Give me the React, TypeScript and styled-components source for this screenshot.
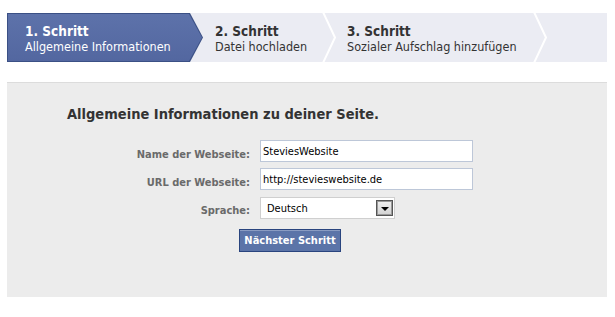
import React from "react";
import styled, { createGlobalStyle } from "styled-components";

const Global = createGlobalStyle`
  html, body { margin: 0; padding: 0; background: #fff; }
  body {
    font-family: "DejaVu Sans Condensed", "DejaVu Sans", sans-serif;
    font-stretch: condensed;
    color: #333;
  }
`;

const Page = styled.div`
  width: 600px;
  padding: 13px 0 0 7px;
`;

const Steps = styled.ol`
  list-style: none;
  margin: 0;
  padding: 0;
  display: flex;
  height: 49px;
  background: #ebecf3;
`;

const Step = styled.li<{ $width: number; $pad: number; $active?: boolean }>`
  position: relative;
  flex: 0 0 ${(p) => p.$width}px;
  box-sizing: border-box;
  padding: 10px 0 0 ${(p) => p.$pad}px;
  color: ${(p) => (p.$active ? "#fff" : "#333")};

  ${(p) =>
    p.$active &&
    `
    &::before, &::after {
      content: "";
      position: absolute;
      clip-path: polygon(0 0, calc(100% - 13px) 0, 100% 50%, calc(100% - 13px) 100%, 0 100%);
    }
    &::before { inset: 0; background: #3b5085; }
    &::after { inset: 1px 1px 1px 1px; background: linear-gradient(#5d72aa, #5367a0); }
  `}
`;

const StepTitle = styled.div`
  position: relative;
  z-index: 1;
  font-weight: bold;
  font-size: 13.5px;
  line-height: 16px;
  white-space: nowrap;
`;

const StepSub = styled.div`
  position: relative;
  z-index: 1;
  font-size: 12.5px;
  line-height: 15px;
  white-space: nowrap;
`;

const Chevron = styled.svg`
  flex: 0 0 14px;
  display: block;
`;

const Filler = styled.li`
  flex: 1;
`;

const Panel = styled.section`
  margin-top: 20px;
  height: 215px;
  box-sizing: border-box;
  background: #ececec;
  border-top: 1px solid #dcdcdc;
  padding-top: 22px;
`;

const Heading = styled.h2`
  margin: 0 0 0 60px;
  font-size: 14.5px;
  line-height: 18px;
  font-weight: bold;
  color: #333;
`;

const Form = styled.form`
  margin-top: 17px;
  display: grid;
  grid-template-columns: 243px 213px;
  column-gap: 10px;
  row-gap: 6px;
  align-items: center;
`;

const Label = styled.label`
  text-align: right;
  font-weight: bold;
  font-size: 11px;
  line-height: 13px;
  color: #6a6a6a;
  padding-top: 6px;
  white-space: nowrap;
`;

const TextInput = styled.input`
  box-sizing: border-box;
  width: 213px;
  height: 22px;
  margin: 0;
  padding: 0 2px;
  border: 1px solid #bdc7d8;
  background: #fff;
  font-family: "DejaVu Sans Condensed", "DejaVu Sans", sans-serif;
  font-stretch: condensed;
  font-size: 11px;
  color: #000;
  outline: none;
`;

const Select = styled.div`
  box-sizing: border-box;
  width: 135px;
  height: 22px;
  margin-top: 1px;
  border: 1px solid #cfcfcf;
  background: #fff;
  display: flex;
  align-items: center;
  justify-content: space-between;
  padding: 0 1px 0 6px;
  font-size: 11px;
  color: #000;
`;

const ArrowBox = styled.span`
  box-sizing: border-box;
  width: 17px;
  height: 16px;
  border: 1px solid #555;
  box-shadow: inset 0 0 0 1px #9a9a9a;
  background: linear-gradient(#f0f0f0, #d2d2d2);
  display: flex;
  align-items: center;
  justify-content: center;

  &::after {
    content: "";
    border-left: 4px solid transparent;
    border-right: 4px solid transparent;
    border-top: 4px solid #000;
    margin-top: 2px;
  }
`;

const ButtonRow = styled.div`
  grid-column: 1 / -1;
  padding-left: 232px;
  margin-top: 4px;
`;

const Button = styled.button`
  box-sizing: border-box;
  width: 102px;
  height: 23px;
  margin: 0;
  padding: 0;
  border: 1px solid #29447e;
  background: #5b74a8;
  box-shadow: inset 0 1px 0 #8a9cc2;
  color: #fff;
  font-family: "DejaVu Sans Condensed", "DejaVu Sans", sans-serif;
  font-stretch: condensed;
  font-weight: bold;
  font-size: 11px;
`;

const Sep = () => (
  <Chevron width="14" height="49" viewBox="0 0 14 49" aria-hidden="true">
    <polyline points="1,-1 13,24.5 1,50" fill="none" stroke="#fff" strokeWidth="2" />
  </Chevron>
);

export default function App() {
  return (
    <Page>
      <Global />
      <Steps>
        <Step $width={196} $pad={18} $active>
          <StepTitle>1. Schritt</StepTitle>
          <StepSub>Allgemeine Informationen</StepSub>
        </Step>
        <Step $width={119} $pad={12}>
          <StepTitle>2. Schritt</StepTitle>
          <StepSub>Datei hochladen</StepSub>
        </Step>
        <Sep />
        <Step $width={197} $pad={11}>
          <StepTitle>3. Schritt</StepTitle>
          <StepSub>Sozialer Aufschlag hinzufügen</StepSub>
        </Step>
        <Sep />
        <Filler />
      </Steps>
      <Panel>
        <Heading>Allgemeine Informationen zu deiner Seite.</Heading>
        <Form onSubmit={(e) => e.preventDefault()}>
          <Label htmlFor="name">Name der Webseite:</Label>
          <TextInput id="name" defaultValue="SteviesWebsite" />
          <Label htmlFor="url">URL der Webseite:</Label>
          <TextInput id="url" defaultValue="http://stevieswebsite.de" />
          <Label>Sprache:</Label>
          <Select>
            <span>Deutsch</span>
            <ArrowBox />
          </Select>
          <ButtonRow>
            <Button type="submit">Nächster Schritt</Button>
          </ButtonRow>
        </Form>
      </Panel>
    </Page>
  );
}
